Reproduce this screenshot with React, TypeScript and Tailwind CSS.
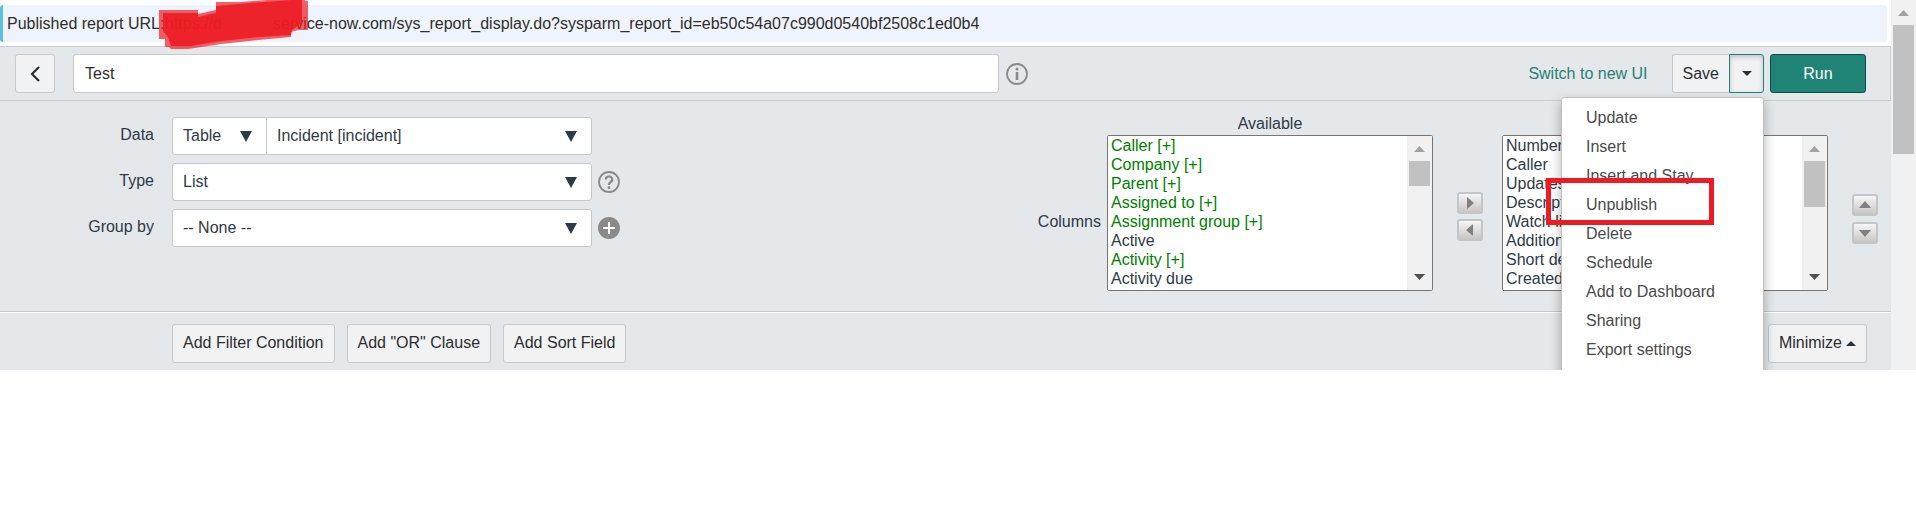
import React, { useState } from 'react';

const availableColumns = [
  { label: 'Caller [+]', related: true },
  { label: 'Company [+]', related: true },
  { label: 'Parent [+]', related: true },
  { label: 'Assigned to [+]', related: true },
  { label: 'Assignment group [+]', related: true },
  { label: 'Active', related: false },
  { label: 'Activity [+]', related: true },
  { label: 'Activity due', related: false },
];

const selectedColumns = [
  { label: 'Number', related: false },
  { label: 'Caller', related: false },
  { label: 'Updates', related: false },
  { label: 'Description', related: false },
  { label: 'Watch list', related: false },
  { label: 'Additional comments', related: false },
  { label: 'Short description', related: false },
  { label: 'Created', related: false },
];

const menuItems = [
  'Update',
  'Insert',
  'Insert and Stay',
  'Unpublish',
  'Delete',
  'Schedule',
  'Add to Dashboard',
  'Sharing',
  'Export settings',
];

const buttonClass = 'h-[39px] rounded-[3px] border border-[#c6c8ca] bg-[#f1f2f4] text-[#2e2e2e]';

function Scrollbar({ thumbClass }: { thumbClass: string }) {
  return (
    <div className="flex w-[25px] shrink-0 flex-col items-center bg-[#f1f1f1]" aria-hidden="true">
      <div className="flex h-[25px] shrink-0 items-center justify-center">
        <svg width="11" height="6" viewBox="0 0 11 6" fill="#a3a3a3"><path d="M0 6 5.5 0 11 6z" /></svg>
      </div>
      <div className={`w-[21px] shrink-0 bg-[#c1c1c1] ${thumbClass}`} />
    </div>
  );
}

function ColumnList({ id, label, columns, thumbClass }: { id: string; label: string; columns: typeof availableColumns; thumbClass: string }) {
  return (
    <div className="relative flex h-[156px] w-[326px] overflow-hidden rounded-[2px] border border-[#767676] bg-white">
      <select
        id={id}
        aria-label={label}
        multiple
        size={8}
        className="min-w-0 flex-1 overflow-hidden bg-white py-px leading-[19px] outline-none [scrollbar-width:none]"
      >
        {columns.map((column) => (
          <option
            key={column.label}
            className={`h-[19px] min-h-0 px-[3px] py-0 leading-[19px] ${column.related ? 'text-[#008000]' : 'text-[#2e3a46]'}`}
          >
            {column.label}
          </option>
        ))}
      </select>
      <Scrollbar thumbClass={thumbClass} />
      <svg className="absolute right-[7px] bottom-[10px]" width="11" height="6" viewBox="0 0 11 6" fill="#505050"><path d="M0 0h11L5.5 6z" /></svg>
    </div>
  );
}

function SelectBox({ id, label, value, className }: { id: string; label?: string; value: string; className: string }) {
  return (
    <div className={`relative h-[38px] border border-[#c6c8ca] bg-white ${className}`}>
      <select id={id} aria-label={label} className="h-full w-full appearance-none bg-transparent px-[10px] text-[#2e3a46] outline-none">
        <option>{value}</option>
      </select>
      <svg className="pointer-events-none absolute top-[13px] right-[14px]" width="12" height="11" viewBox="0 0 12 11" fill="#2e3a46">
        <path d="M0 0h12L6 11z" />
      </svg>
    </div>
  );
}

function ArrowButton({ label, path }: { label: string; path: string }) {
  return (
    <button
      aria-label={label}
      className="flex h-[22px] w-[26px] items-center justify-center rounded-[3px] border-2 border-[#c3c6c9] bg-linear-to-b from-[#f6f6f6] to-[#c9c5c5]"
    >
      <svg width="14" height="14" viewBox="0 0 14 14" fill="#808080"><path d={path} /></svg>
    </button>
  );
}

export default function App() {
  const [name, setName] = useState('Test');

  return (
    <div className="flex overflow-hidden bg-white font-['Liberation_Sans',Arial,sans-serif] text-[16px] leading-[20px] text-[#2e3a46]">
      <div className="relative h-[370px] min-w-0 flex-1 overflow-hidden">
        {/* Published URL */}
        <div className="relative mt-[5px] mr-1 flex h-[37px] items-center rounded-[3px] border-l-[3px] border-[#5bc0de] bg-[#eff3fc] pl-1 text-[#2e2e2e]">
          <span className="w-[158px] whitespace-nowrap">Published report URL:</span>
          <span className="w-[108px]">https://d</span>
          <span>service-now.com/sys_report_display.do?sysparm_report_id=eb50c54a07c990d0540bf2508c1ed0b4</span>
          {/* marker strokes over the instance name */}
          <svg className="absolute top-[-5px] left-[156px]" width="152" height="50" viewBox="0 0 152 50" fill="#ed1c24">
            <path opacity="0.7" d="M0 10h39v4l18-4V2h24L108 0h38v1h3v29h-10l-7 2v5l-33 3-37 4-33 5H12l-2-2H6V39H0z" />
            <path opacity="0.9" d="M4 13h35v4l18-4V6l34-3 41-3h11v23l-10 7-1 5-33 2-37 4-30 5H12l-3-9-5-6z" />
          </svg>
        </div>

        {/* Header */}
        <header className="mt-1 flex h-[55px] items-center border border-l-0 border-[#c9cccf] bg-[#e4e8eb] pr-6 pl-[15px] shadow-sm">
          <button aria-label="Back" className={`${buttonClass} flex w-10 items-center justify-center`}>
            <svg width="10" height="16" viewBox="0 0 10 16" fill="none" stroke="#2e2e2e" strokeWidth="2.2"><path d="M9 1 2 8l7 7" /></svg>
          </button>
          <input
            aria-label="Report name"
            value={name}
            onChange={(e) => setName(e.target.value)}
            className="ml-[18px] h-[39px] w-1/2 rounded-[3px] border border-[#c6c8ca] bg-white px-[11px] text-[#2e2e2e] outline-none"
          />
          <svg className="ml-[7px]" width="22" height="22" viewBox="0 0 22 22">
            <circle cx="11" cy="11" r="10" fill="none" stroke="#8a8a8a" strokeWidth="1.8" />
            <path d="M11 9v8" stroke="#8a8a8a" strokeWidth="2.6" />
            <circle cx="11" cy="6" r="1.5" fill="#8a8a8a" />
          </svg>
          <a href="#" className="ml-auto text-[#278173]">Switch to new UI</a>
          <button className={`${buttonClass} ml-6 rounded-r-none border-r-0 px-[10px]`}>Save</button>
          <button aria-label="More save options" className="flex h-[39px] w-[35px] items-center justify-center rounded-r-[3px] border border-[#1f8476] bg-[#f1f2f4] shadow-[inset_0_2px_5px_rgba(0,0,0,0.2)]">
            <svg width="10" height="5" viewBox="0 0 10 5" fill="#2e2e2e"><path d="M0 0h10L5 5z" /></svg>
          </button>
          <button className="ml-1.5 h-[39px] w-24 rounded-[3px] border border-[#0e4f45] bg-[#1f8476] text-white">Run</button>
        </header>

        {/* Report settings */}
        <section className="flex h-[210px] justify-between bg-[#e4e8eb] pr-[13px]">
          <div className="flex flex-col gap-[8px] pt-4">
            <div className="flex items-center">
              <label htmlFor="source" className="mr-[18px] w-[154px] pb-[3px] text-right">Data</label>
              <SelectBox id="source" value="Table" className="w-[95px] rounded-l-[3px]" />
              <SelectBox id="table" label="Table name" value="Incident [incident]" className="w-[325px] rounded-r-[3px] border-l-0" />
            </div>
            <div className="flex items-center">
              <label htmlFor="type" className="mr-[18px] w-[154px] pb-[3px] text-right">Type</label>
              <SelectBox id="type" value="List" className="w-[420px] rounded-[3px]" />
              <svg className="ml-1.5" width="22" height="22" viewBox="0 0 22 22" fill="none" stroke="#8a8a8a">
                <circle cx="11" cy="11" r="10" strokeWidth="1.8" />
                <path d="M7.8 8.5a3.2 3 0 1 1 4.8 2.5C11.4 11.8 11 12.4 11 14" strokeWidth="2.2" />
                <circle cx="11" cy="16.7" r="1.4" fill="#8a8a8a" stroke="none" />
              </svg>
            </div>
            <div className="flex items-center">
              <label htmlFor="group" className="mr-[18px] w-[154px] pb-[3px] text-right">Group by</label>
              <SelectBox id="group" value="-- None --" className="w-[420px] rounded-[3px]" />
              <button aria-label="Add group" className="ml-1.5">
                <svg width="22" height="22" viewBox="0 0 22 22">
                  <circle cx="11" cy="11" r="11" fill="#8a8a8a" />
                  <path d="M11 5v12M5 11h12" stroke="#fff" strokeWidth="2" />
                </svg>
              </button>
            </div>
          </div>

          <div className="flex pt-3">
            <label htmlFor="available" className="mt-[99px] mr-1.5">Columns</label>
            <div>
              <div className="h-[22px] text-center leading-[22px]">Available</div>
              <ColumnList id="available" label="Available" columns={availableColumns} thumbClass="h-[25px]" />
            </div>
            <div className="mt-[79px] mr-[19px] ml-6 flex flex-col gap-[5px]">
              <ArrowButton label="Add" path="M4 1v12l7-6z" />
              <ArrowButton label="Remove" path="M10 1v12L3 7z" />
            </div>
            <div className="mt-[22px]">
              <ColumnList id="selected" label="Selected" columns={selectedColumns} thumbClass="h-[46px]" />
            </div>
            <div className="mt-[81px] ml-6 flex flex-col gap-1.5">
              <ArrowButton label="Move up" path="M1 10h12L7 3z" />
              <ArrowButton label="Move down" path="M1 4h12l-6 7z" />
            </div>
          </div>
        </section>

        {/* Filter actions */}
        <section className="flex h-[59px] items-center gap-3 border-t border-[#c6c8ca] bg-[#e4e8eb] pt-1 pr-6 pl-[172px] shadow-[inset_0_1px_0_#fff]">
          <button className={`${buttonClass} px-[10px]`}>Add Filter Condition</button>
          <button className={`${buttonClass} px-[10px]`}>Add "OR" Clause</button>
          <button className={`${buttonClass} px-[10px]`}>Add Sort Field</button>
          <button className={`${buttonClass} ml-auto flex items-center gap-1 px-[10px]`}>
            Minimize
            <svg width="10" height="5" viewBox="0 0 10 5" fill="#2e2e2e"><path d="M0 5h10L5 0z" /></svg>
          </button>
        </section>

        {/* Save menu */}
        <div className="absolute top-[97px] right-[127px] h-[300px] w-[203px] rounded-[3px] border border-[#c0c0c0] bg-white pt-[5px] shadow-[0_5px_12px_rgba(0,0,0,0.3)]">
          {menuItems.map((item) => (
            <button key={item} className="block h-[29px] w-full px-6 text-left text-[#4a4a4a]">{item}</button>
          ))}
        </div>
        <div className="pointer-events-none absolute top-[178px] right-[177px] h-[47px] w-[168px] border-5 border-[#ed1c24]" />
      </div>
      <Scrollbar thumbClass="h-[129px]" />
    </div>
  );
}
